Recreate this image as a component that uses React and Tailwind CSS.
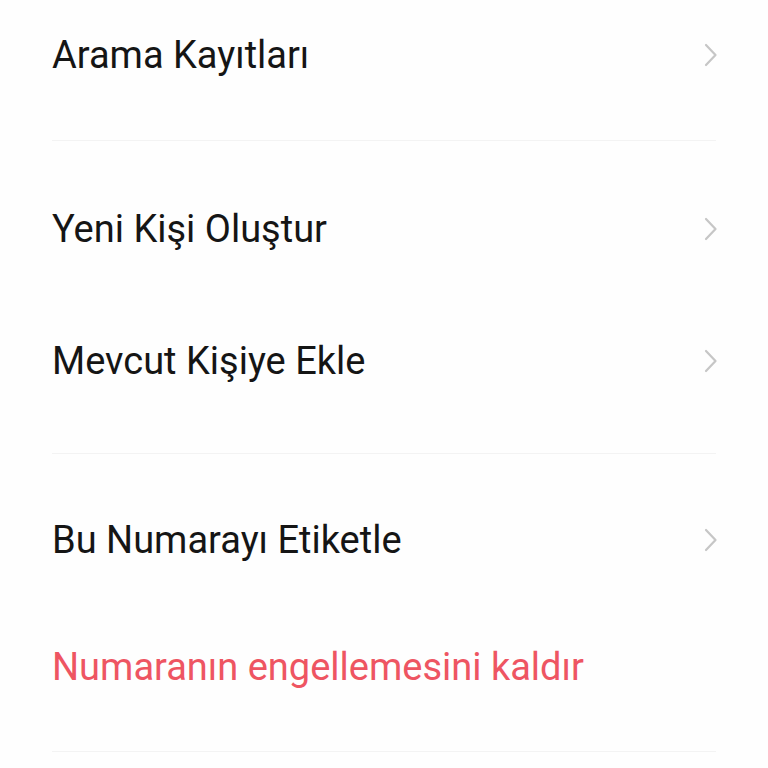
const groups = [
    { pad: 'pt-0 pb-[30px]', rows: [{ label: 'Arama Kayıtları', h: 'h-[110px]' }] },
    {
        pad: 'pt-[22px] pb-[26px]', rows: [
            { label: 'Yeni Kişi Oluştur', h: 'h-[132px]' },
            { label: 'Mevcut Kişiye Ekle', h: 'h-[132px]' },
        ]
    },
    {
        pad: 'pt-[21px] pb-[22px]', rows: [
            { label: 'Bu Numarayı Etiketle', h: 'h-[130px]' },
            { label: 'Numaranın engellemesini kaldır', h: 'h-[124px]', danger: true },
        ]
    },
]

function Chevron() {
    return (
        <svg width="16" height="24" viewBox="0 0 16 24" fill="none" className="mr-[-3px]">
            <path d="M3 2 L12.5 12 L3 22" stroke="#c6c6c6" strokeWidth="2.2" strokeLinecap="round" strokeLinejoin="round" />
        </svg>
    )
}

export default function App() {
    return (
        <div className="w-[768px] h-[768px] overflow-hidden bg-[#fefefe] px-[52px]"
            style={{ fontFamily: 'Roboto, "Noto Sans", sans-serif' }}>
            {groups.map((g, gi) => (
                <div key={gi} className={`${g.pad} border-b border-[#f3f3f3]`}>
                    {g.rows.map(r => (
                        <div key={r.label} className={`${r.h} flex items-center justify-between`}>
                            <span className={`text-[38px] leading-none ${r.danger ? 'text-[#ee5562]' : 'text-[#151515]'}`}>
                                {r.label}
                            </span>
                            {!r.danger && <Chevron />}
                        </div>
                    ))}
                </div>
            ))}
        </div>
    )
}
